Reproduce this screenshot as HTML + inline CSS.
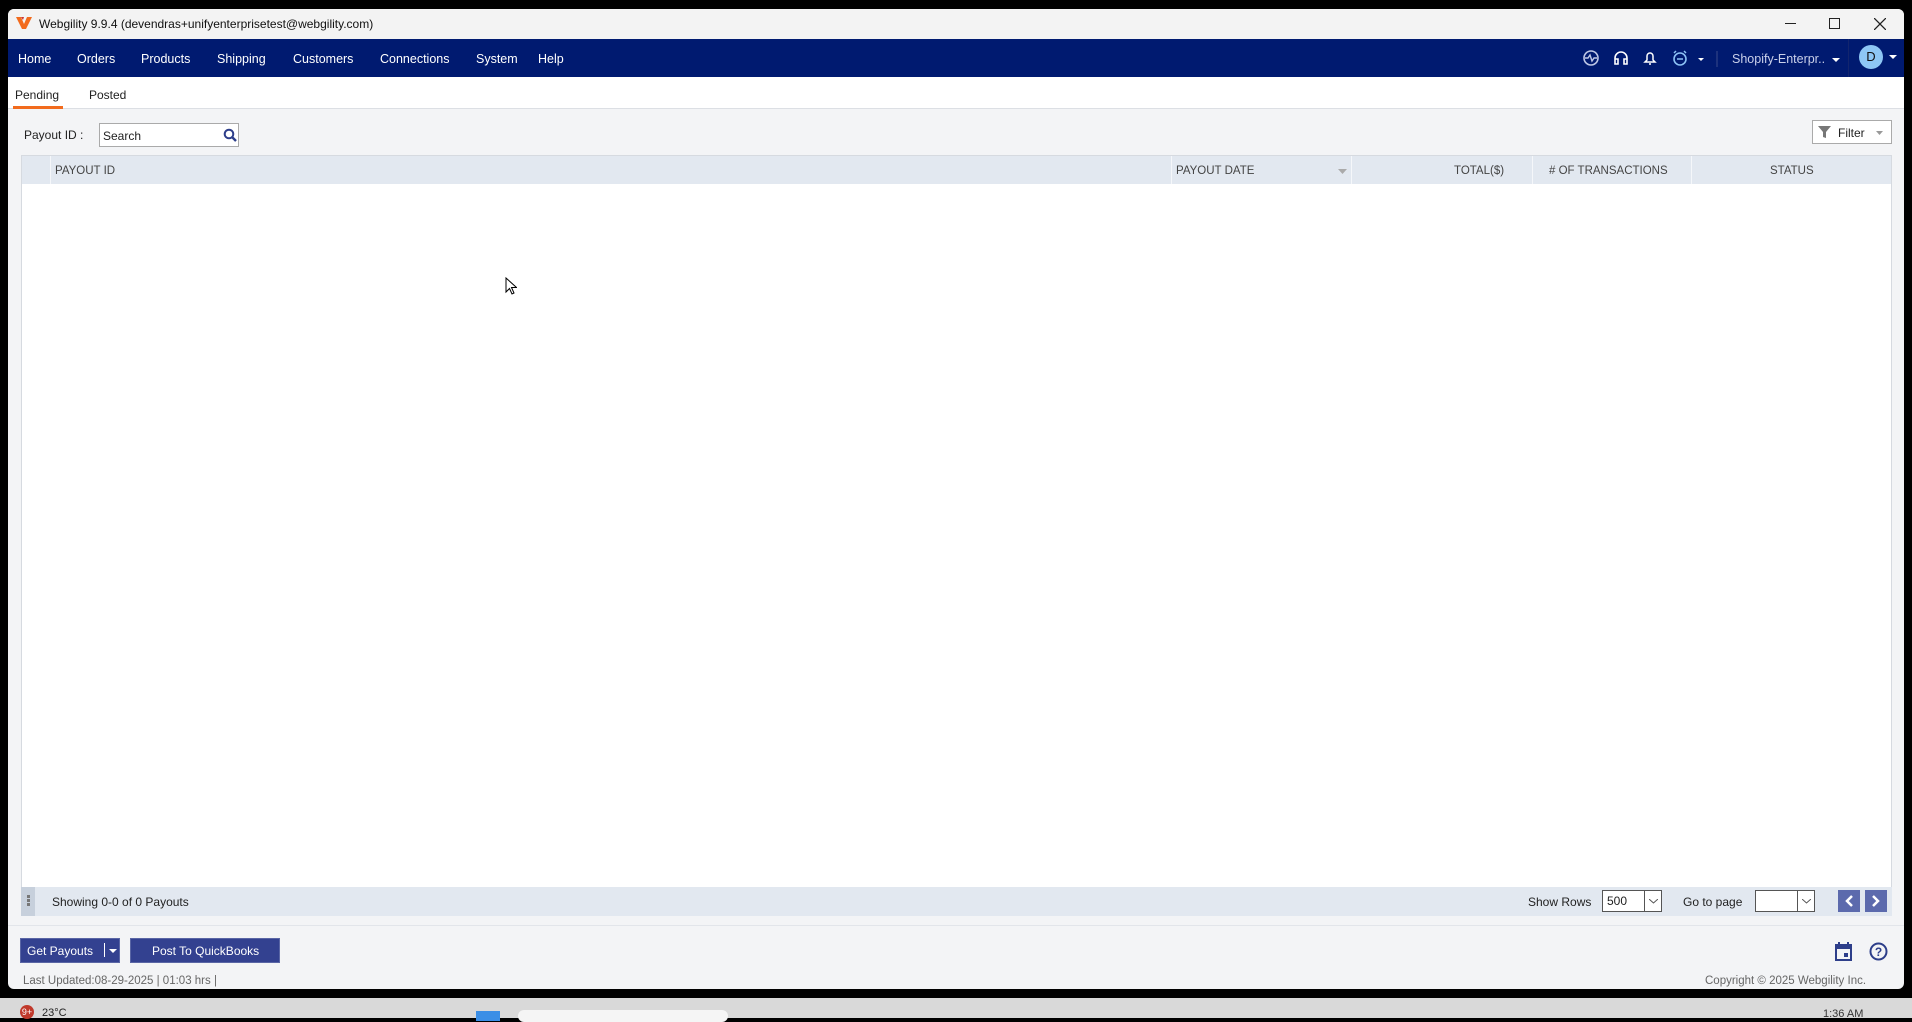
<!DOCTYPE html>
<html><head><meta charset="utf-8"><style>
*{margin:0;padding:0;box-sizing:border-box}
body{width:1912px;height:1018px;background:#000;font-family:"Liberation Sans",Arial,sans-serif;position:relative;overflow:hidden;font-size:12px;color:#222}
.a{position:absolute}
#win{left:8px;top:9px;width:1896px;height:980px;background:#f3f4f6;border-radius:6px;overflow:hidden}
.t{position:absolute;white-space:nowrap}
.n{top:43px;color:#fff;font-size:12.5px}
.h{top:156px;font-size:11.5px;color:#444}
</style></head><body>
<div id="win" class="a">
 <div class="a" style="left:0;top:0;width:1896px;height:30px;background:#f3f3f3"></div>
 <svg class="a" style="left:8px;top:7px" width="16" height="14" viewBox="0 0 16 14"><path d="M0 1h5l3 7 3-7h5l-6 12H6z" fill="#f26b1d"/><path d="M5 1h3l-1 3z" fill="#c33"/></svg>
 <div class="t" style="left:31px;top:8px;font-size:12px;color:#111">Webgility 9.9.4 (devendras+unifyenterprisetest@webgility.com)</div>
 <div class="a" style="left:1777px;top:14px;width:11px;height:1.3px;background:#222"></div>
 <div class="a" style="left:1821px;top:9px;width:11px;height:11px;border:1.3px solid #222"></div>
 <svg class="a" style="left:1866px;top:9px" width="12" height="12"><path d="M0 0l12 12M12 0L0 12" stroke="#222" stroke-width="1.3"/></svg>
 <div class="a" style="left:0;top:30px;width:1896px;height:38px;background:#001a70"></div>
 <div class="t n" style="left:10px">Home</div>
 <div class="t n" style="left:69px">Orders</div>
 <div class="t n" style="left:133px">Products</div>
 <div class="t n" style="left:209px">Shipping</div>
 <div class="t n" style="left:285px">Customers</div>
 <div class="t n" style="left:372px">Connections</div>
 <div class="t n" style="left:468px">System</div>
 <div class="t n" style="left:530px">Help</div>
 <svg class="a" style="left:1572px;top:39px" width="140" height="20" viewBox="0 0 140 20">
  <circle cx="11" cy="10" r="7" fill="none" stroke="#bfc8e6" stroke-width="1.6"/><path d="M5 10h3l2-3 2 6 2-3h3" fill="none" stroke="#bfc8e6" stroke-width="1.4"/>
  <path d="M35 15v-5a6 6 0 0 1 12 0v5M35 11h3v5h-3zM44 11h3v5h-3z" fill="none" stroke="#fff" stroke-width="1.6"/>
  <path d="M65 14h10l-2-2v-4a3 3 0 0 0-6 0v4zM69 16h2" fill="none" stroke="#fff" stroke-width="1.5"/>
  <circle cx="100" cy="11" r="6" fill="none" stroke="#8cc2f5" stroke-width="1.6"/><path d="M97 11h6M94 5l2-2M106 5l-2-2" stroke="#8cc2f5" stroke-width="1.5"/>
  <path d="M118 10h6l-3 3z" fill="#fff"/><path d="M137 3v16" stroke="#3a4a8a"/>
 </svg>
 <div class="t" style="left:1724px;top:43px;color:#c9d0ea;font-size:12.5px">Shopify-Enterpr..</div>
 <svg class="a" style="left:1824px;top:49px" width="8" height="5"><path d="M0 0h8l-4 4z" fill="#fff"/></svg>
 <div class="a" style="left:1840px;top:30px;width:1px;height:38px;background:#12256e"></div>
 <div class="a" style="left:1851px;top:36px;width:24px;height:24px;border-radius:50%;background:#8ec7f5;color:#111;font-size:13px;text-align:center;line-height:24px">D</div>
 <svg class="a" style="left:1881px;top:46px" width="8" height="5"><path d="M0 0h8l-4 4z" fill="#fff"/></svg>
 <div class="a" style="left:0;top:68px;width:1896px;height:32px;background:#fff;border-bottom:1px solid #dcdfe4"></div>
 <div class="t" style="left:7px;top:79px;font-size:12px">Pending</div>
 <div class="a" style="left:5px;top:97px;width:50px;height:3px;background:#f26b1d"></div>
 <div class="t" style="left:81px;top:79px;font-size:12px">Posted</div>
 <div class="t" style="left:16px;top:119px;font-size:12px">Payout ID :</div>
 <div class="a" style="left:91px;top:114px;width:140px;height:24px;background:#fff;border:1px solid #aaa"></div>
 <div class="t" style="left:95px;top:120px;font-size:12px">Search</div>
 <svg class="a" style="left:215px;top:119px" width="14" height="14"><circle cx="6" cy="6" r="4.3" fill="none" stroke="#2d3e8a" stroke-width="2"/><path d="M9 9l4 4" stroke="#2d3e8a" stroke-width="2.4"/></svg>
 <div class="a" style="left:1804px;top:111px;width:80px;height:24px;background:#fff;border:1px solid #aaa"></div>
 <svg class="a" style="left:1810px;top:116px" width="14" height="14"><path d="M0 1h13l-5 6v6l-3-1V7z" fill="#777"/></svg>
 <div class="t" style="left:1830px;top:117px;font-size:12px">Filter</div>
 <svg class="a" style="left:1868px;top:122px" width="7" height="4"><path d="M0 0h7l-3.5 4z" fill="#999"/></svg>
 <div class="a" style="left:13px;top:146px;width:1871px;height:741px;background:#fff;border:1px solid #d6dae0"></div>
 <div class="a" style="left:14px;top:147px;width:1869px;height:28px;background:#e2e8f0"></div>
 <div class="a" style="left:42px;top:147px;width:1px;height:28px;background:#f5f7fa"></div>
 <div class="a" style="left:1163px;top:147px;width:1px;height:28px;background:#f5f7fa"></div>
 <div class="a" style="left:1343px;top:147px;width:1px;height:28px;background:#f5f7fa"></div>
 <div class="a" style="left:1524px;top:147px;width:1px;height:28px;background:#f5f7fa"></div>
 <div class="a" style="left:1683px;top:147px;width:1px;height:28px;background:#f5f7fa"></div>
 <div class="t h" style="left:47px">PAYOUT ID</div>
 <div class="t h" style="left:1168px">PAYOUT DATE</div>
 <svg class="a" style="left:1330px;top:160px" width="9" height="5"><path d="M0 0h9l-4.5 5z" fill="#aaa"/></svg>
 <div class="t h" style="left:1446px">TOTAL($)</div>
 <div class="t h" style="left:1541px"># OF TRANSACTIONS</div>
 <div class="t h" style="left:1762px">STATUS</div>
 <svg class="a" style="left:497px;top:268px" width="12" height="18"><path d="M1 1v14l3.5-3.5 2.5 5.5 2-1-2.5-5.5h5z" fill="#fff" stroke="#000"/></svg>
 <div class="a" style="left:13px;top:878px;width:1871px;height:29px;background:#e2e8f0"></div>
 <div class="a" style="left:13px;top:878px;width:14px;height:29px;background:#c7d0dc"></div>
 <div class="a" style="left:19px;top:886px;width:3px;height:3px;background:#777;box-shadow:0 4px #777,0 8px #777"></div>
 <div class="t" style="left:44px;top:886px;font-size:12px">Showing 0-0 of 0 Payouts</div>
 <div class="t" style="left:1520px;top:886px;font-size:12px">Show Rows</div>
 <div class="a" style="left:1594px;top:881px;width:60px;height:22px;background:#fff;border:1px solid #555"></div>
 <div class="a" style="left:1636px;top:881px;width:1px;height:22px;background:#555"></div>
 <div class="t" style="left:1599px;top:885px;font-size:12px">500</div>
 <svg class="a" style="left:1641px;top:890px" width="9" height="5"><path d="M0 0l4.5 4 4.5-4" fill="none" stroke="#555"/></svg>
 <div class="t" style="left:1675px;top:886px;font-size:12px">Go to page</div>
 <div class="a" style="left:1747px;top:881px;width:60px;height:22px;background:#fff;border:1px solid #555"></div>
 <div class="a" style="left:1789px;top:881px;width:1px;height:22px;background:#555"></div>
 <svg class="a" style="left:1794px;top:890px" width="9" height="5"><path d="M0 0l4.5 4 4.5-4" fill="none" stroke="#555"/></svg>
 <div class="a" style="left:1830px;top:881px;width:22px;height:22px;background:#5c6aad"></div>
 <div class="a" style="left:1857px;top:881px;width:22px;height:22px;background:#5c6aad"></div>
 <svg class="a" style="left:1830px;top:881px" width="50" height="22"><path d="M14 6l-5 5 5 5M35 6l5 5-5 5" fill="none" stroke="#fff" stroke-width="2.5"/></svg>
 <div class="a" style="left:0;top:916px;width:1896px;height:1px;background:#e2e5ea"></div>
 <div class="a" style="left:12px;top:929px;width:100px;height:25px;background:#334190;border:1px solid #5a66a5"></div>
 <div class="t" style="left:19px;top:935px;font-size:12px;color:#fff">Get Payouts</div>
 <div class="a" style="left:96px;top:934px;width:1px;height:14px;background:#fff"></div>
 <svg class="a" style="left:101px;top:940px" width="8" height="4"><path d="M0 0h8l-4 4z" fill="#fff"/></svg>
 <div class="a" style="left:122px;top:929px;width:150px;height:25px;background:#334190;border:1px solid #5a66a5"></div>
 <div class="t" style="left:144px;top:935px;font-size:12px;color:#fff">Post To QuickBooks</div>
 <div class="t" style="left:15px;top:966px;font-size:11.5px;color:#666">Last Updated:08-29-2025 | 01:03 hrs |</div>
 <svg class="a" style="left:1827px;top:933px" width="18" height="19"><rect x="1" y="3" width="15" height="15" fill="none" stroke="#2d3e8a" stroke-width="2"/><rect x="1" y="3" width="15" height="4" fill="#2d3e8a"/><path d="M4 0v4M13 0v4" stroke="#2d3e8a" stroke-width="2"/><rect x="9" y="11" width="4" height="4" fill="#2d3e8a"/></svg>
 <svg class="a" style="left:1861px;top:933px" width="19" height="19"><circle cx="9.5" cy="9.5" r="8" fill="none" stroke="#2d3e8a" stroke-width="2"/><text x="9.5" y="14" font-size="12" font-weight="bold" text-anchor="middle" fill="#2d3e8a" font-family="Liberation Sans">?</text></svg>
 <div class="t" style="left:1697px;top:966px;font-size:11.5px;color:#666">Copyright © 2025 Webgility Inc.</div>
</div>
<div class="a" style="left:0;top:998px;width:1912px;height:20px;background:#d9d9d9"></div>
<div class="a" style="left:20px;top:1005px;width:14px;height:14px;border-radius:50%;background:#c0392b;color:#fff;font-size:9px;text-align:center;line-height:14px">9+</div>
<div class="t" style="left:42px;top:1007px;font-size:11px">23°C</div>
<div class="a" style="left:476px;top:1011px;width:24px;height:10px;background:#3a8ee6"></div>
<div class="a" style="left:518px;top:1010px;width:210px;height:12px;border-radius:8px;background:#f5f5f5"></div>
<div class="t" style="left:1823px;top:1008px;font-size:11px;color:#333">1:36 AM</div>
</body></html>
